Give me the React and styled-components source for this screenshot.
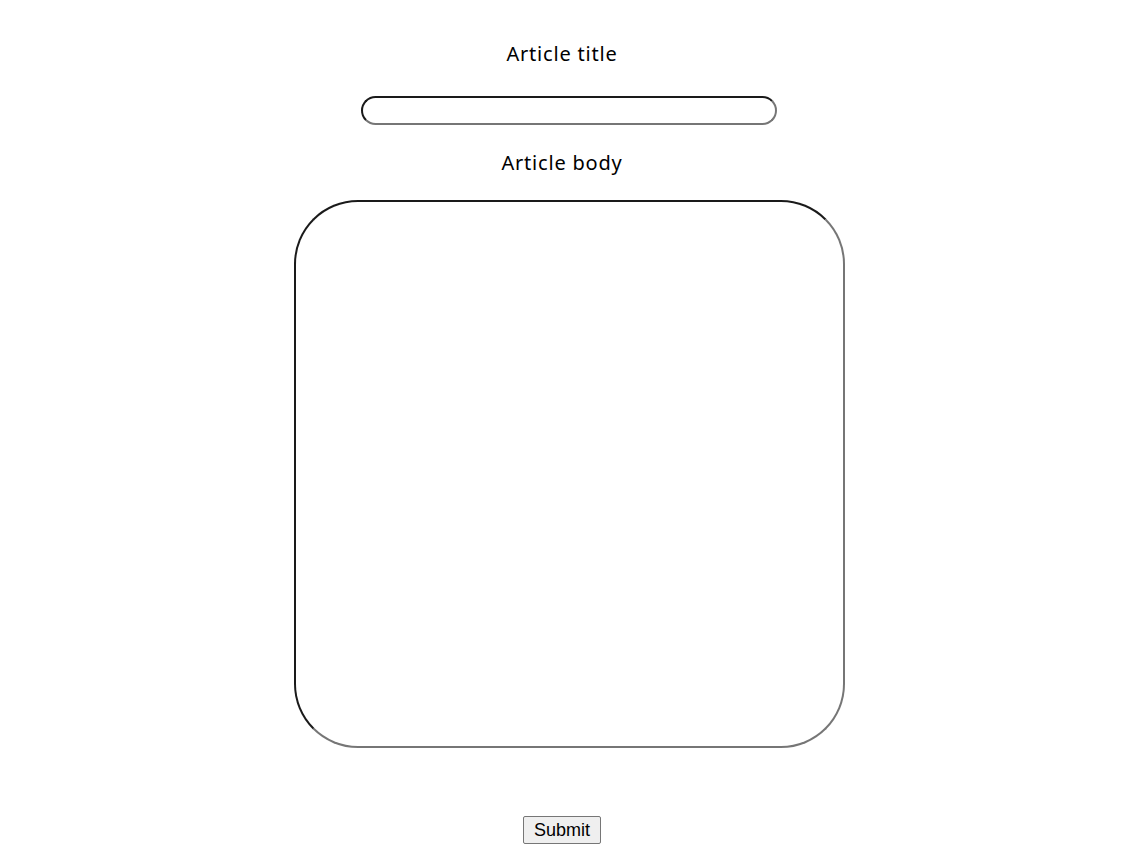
import React from "react";
import styled, { createGlobalStyle } from "styled-components";

const Global = createGlobalStyle`
  html, body { margin: 0; padding: 0; background: #fff; }
  body { font-family: "Noto Sans", "Open Sans", sans-serif; color: #000; }
`;

const Form = styled.form`
  display: flex;
  flex-direction: column;
  align-items: center;
  padding-top: 42px;
`;

const Label = styled.label`
  display: block;
  font-size: 20px;
  letter-spacing: 0.8px;
  line-height: 24px;
  text-align: center;
  margin-top: ${(p) => p.$top || 0}px;
`;

const TitleInput = styled.input`
  box-sizing: border-box;
  width: 416px;
  height: 29px;
  margin: 30px 0 0 14px;
  border: 2px solid;
  border-color: #1a1a1a #767676 #767676 #1a1a1a;
  border-radius: 15px;
  background: #fff;
  outline: none;
  font: 16px "Noto Sans", sans-serif;
  padding: 0 10px;
`;

const BodyArea = styled.textarea`
  box-sizing: border-box;
  width: 551px;
  height: 548px;
  margin: 25px 0 0 14px;
  border: 2px solid;
  border-color: #1a1a1a #767676 #767676 #1a1a1a;
  border-radius: 64px;
  background: #fff;
  outline: none;
  resize: none;
  font: 16px "Noto Sans", sans-serif;
  padding: 20px;
`;

const SubmitButton = styled.button`
  margin-top: 68px;
  height: 28px;
  padding: 1px 10px;
  font: 18px "Liberation Sans", Arial, sans-serif;
  color: #000;
  background: #efefef;
  border: 1px solid #767676;
  border-radius: 2px;
`;

export default function App() {
  return (
    <>
      <Global />
      <Form onSubmit={(e) => e.preventDefault()}>
        <Label htmlFor="title">Article title</Label>
        <TitleInput id="title" type="text" />
        <Label htmlFor="body" $top={26}>Article body</Label>
        <BodyArea id="body" />
        <SubmitButton type="submit">Submit</SubmitButton>
      </Form>
    </>
  );
}
